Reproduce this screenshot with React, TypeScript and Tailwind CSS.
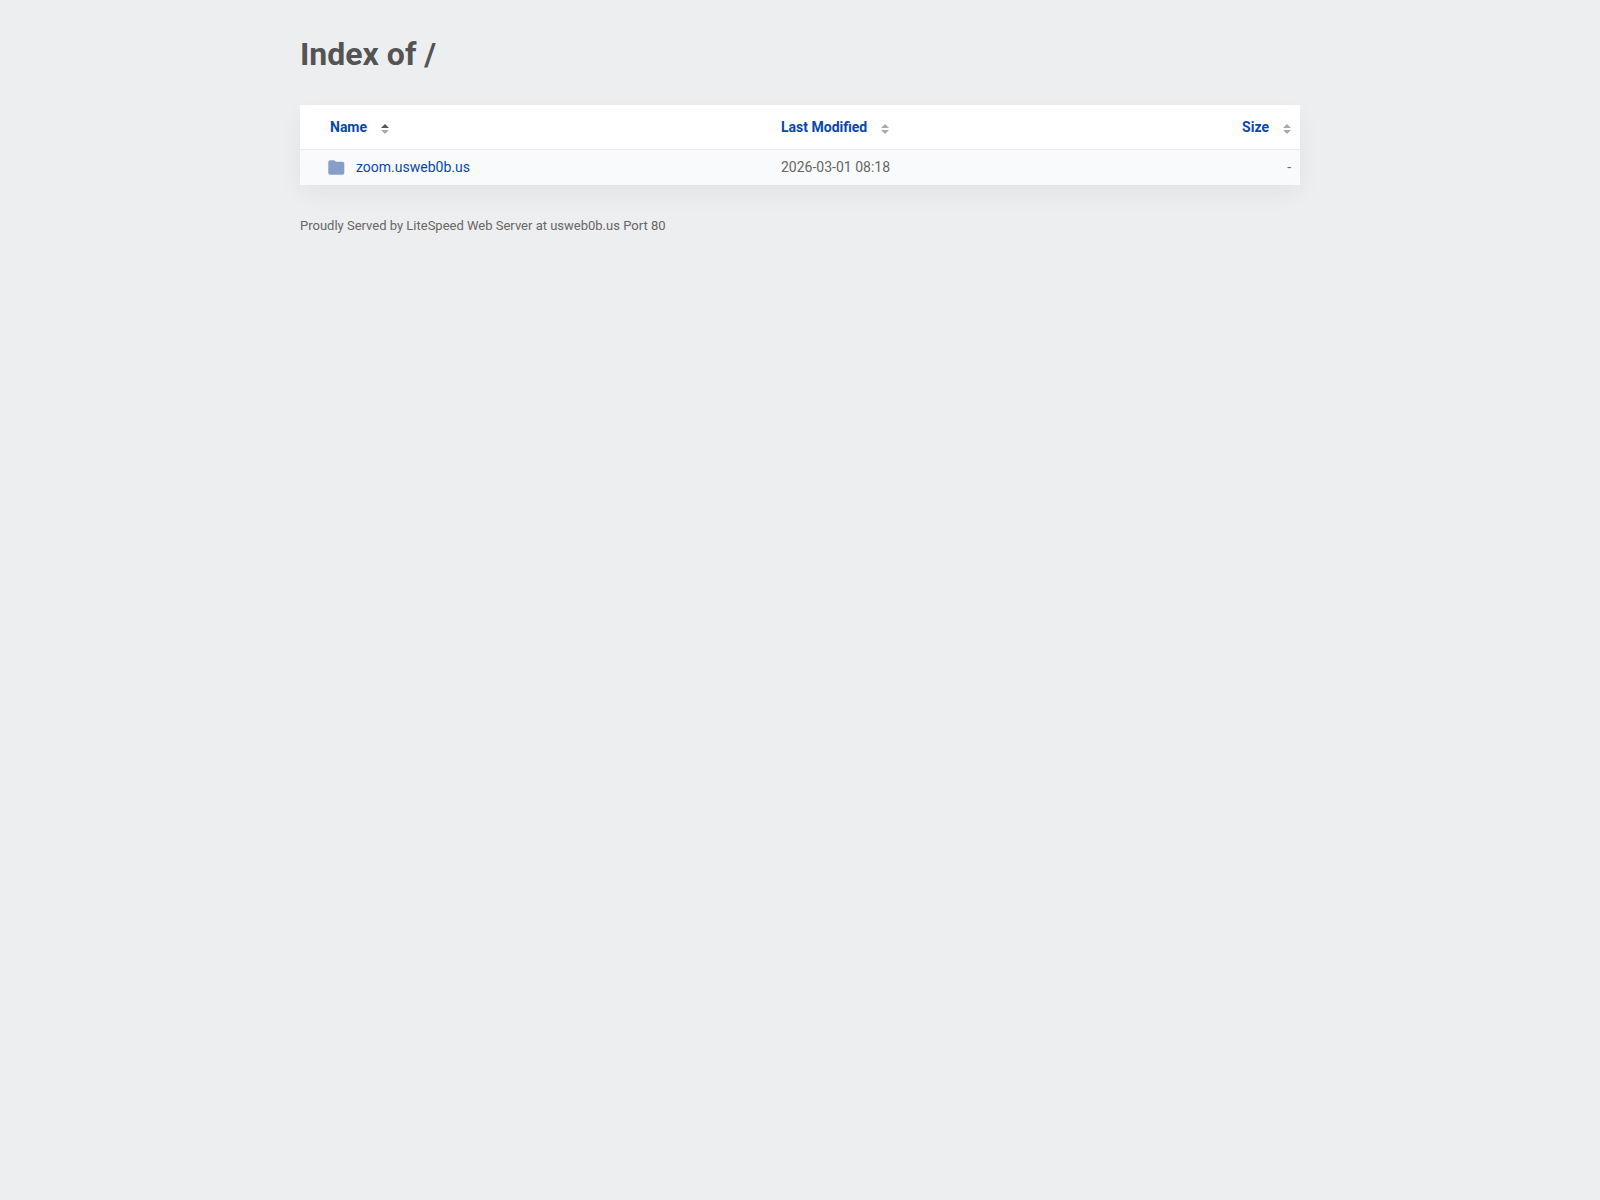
import React from "react";

const columns = [
  { label: "Name", sorted: true, className: "w-[472px] pl-[30px] text-left" },
  { label: "Last Modified", sorted: false, className: "pl-[9px] text-left" },
  { label: "Size", sorted: false, className: "pr-[9px] text-right" },
];

const entries = [{ name: "zoom.usweb0b.us", modified: "2026-03-01 08:18", size: "-" }];

function SortIcon({ sorted }: { sorted: boolean }) {
  return (
    <svg className="mt-1" width="8" height="10" viewBox="0 0 8 10" aria-hidden="true">
      <path d="M0 4L4 0L8 4Z" fill={sorted ? "#555" : "#aaa"} />
      <path d="M0 6L4 10L8 6Z" fill="#aaa" />
    </svg>
  );
}

function FolderIcon() {
  return (
    <svg width="17" height="15" viewBox="0 0 17 15" fill="#879fc8" aria-hidden="true">
      <path d="M2 .3H6.200L8 1.800H14.500Q16.300 1.800 16.300 3.600V13Q16.300 14.800 14.500 14.800H2Q.3 14.800 .3 13V2Q.3 .3 2 .3Z" />
    </svg>
  );
}

export default function App() {
  return (
    <div className="min-h-screen bg-[#edeef0] font-[Roboto,sans-serif] text-sm text-[#545454]">
      <main className="mx-auto max-w-[1000px] pt-8">
        <h1 className="text-[32px] leading-11 font-bold">Index of /</h1>

        <table className="mt-[29px] w-full bg-white text-[#666] shadow-[0_9px_24px_-2px_rgba(0,37,17,0.06)]">
          <thead>
            <tr className="h-11 border-b border-[#e9ebee]">
              {columns.map((col) => (
                <th key={col.label} className={col.className}>
                  <button className="inline-flex items-center gap-3.5 font-bold text-[#0747ae]">
                    {col.label}
                    <SortIcon sorted={col.sorted} />
                  </button>
                </th>
              ))}
            </tr>
          </thead>
          <tbody>
            {entries.map((entry) => (
              <tr key={entry.name} className="h-9 bg-[#f9fafc]">
                <td className="pl-7">
                  <a href="#" className="flex items-center gap-[11px] text-[#0747ae]">
                    <FolderIcon />
                    {entry.name}
                  </a>
                </td>
                <td className="pl-[9px]">{entry.modified}</td>
                <td className="pr-[9px] text-right">{entry.size}</td>
              </tr>
            ))}
          </tbody>
        </table>

        <footer className="mt-8 text-[13px] text-[#666]">
          Proudly Served by LiteSpeed Web Server at usweb0b.us Port 80
        </footer>
      </main>
    </div>
  );
}
